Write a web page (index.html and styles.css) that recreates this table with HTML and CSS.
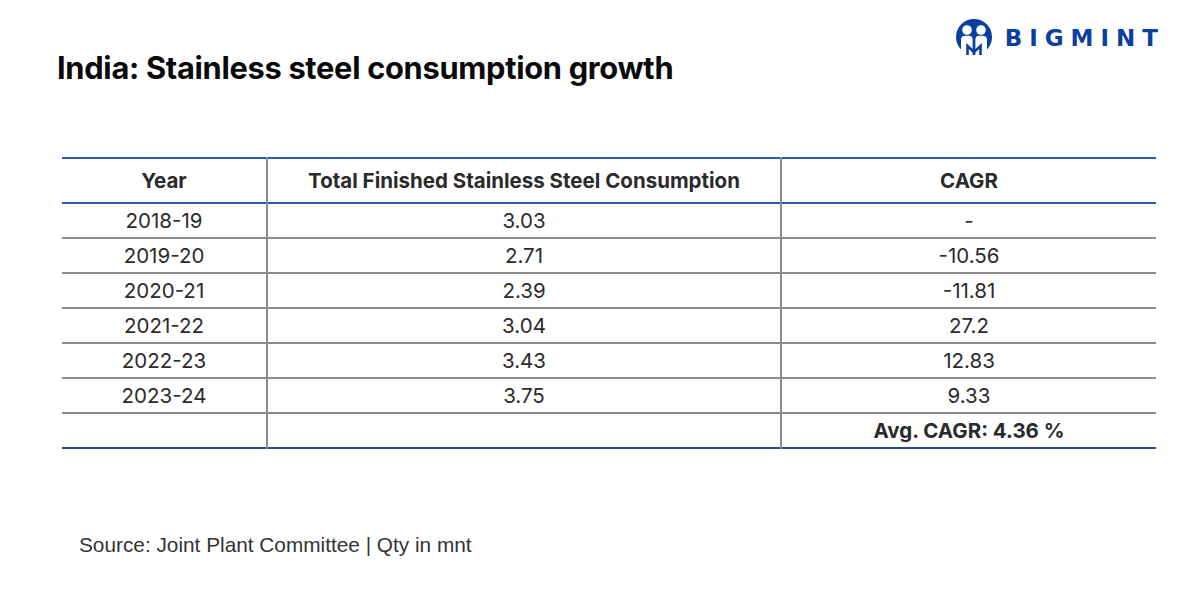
FILE: index.html
```html
<!DOCTYPE html>
<html>
<head>
<meta charset="utf-8">
<link rel="stylesheet" href="styles.css">
</head>
<body>
<div class="page">
  <header class="top">
    <h1 class="title">India: Stainless steel consumption growth</h1>
    <div class="logo">
      <svg class="logo-mark" width="38" height="37" viewBox="0 0 38 37">
        <circle cx="19" cy="18" r="18" fill="#0b3f9f"/>
        <circle cx="12" cy="11" r="4.8" fill="#fff"/>
        <circle cx="26" cy="11" r="4.8" fill="#fff"/>
        <path d="M6 37 L6 21 Q6 16.8 10.5 16.8 L14 16.8 Q17.6 16.8 17.6 21 L17.6 37 Z" fill="#fff"/>
        <path d="M20.4 37 L20.4 21 Q20.4 16.8 24 16.8 L27.5 16.8 Q32 16.8 32 21 L32 37 Z" fill="#fff"/>
        <path d="M12.5 36 L12.5 27 L19 33 L25.5 27 L25.5 36" fill="none" stroke="#0b3f9f" stroke-width="2.6"/>
      </svg>
      <span class="logo-text">BIGMINT</span>
    </div>
  </header>

  <table class="data">
    <thead>
      <tr><th class="c1">Year</th><th class="c2">Total Finished Stainless Steel Consumption</th><th class="c3">CAGR</th></tr>
    </thead>
    <tbody>
      <tr><td>2018-19</td><td>3.03</td><td>-</td></tr>
      <tr><td>2019-20</td><td>2.71</td><td>-10.56</td></tr>
      <tr><td>2020-21</td><td>2.39</td><td>-11.81</td></tr>
      <tr><td>2021-22</td><td>3.04</td><td>27.2</td></tr>
      <tr><td>2022-23</td><td>3.43</td><td>12.83</td></tr>
      <tr><td>2023-24</td><td>3.75</td><td>9.33</td></tr>
      <tr class="avg"><td></td><td></td><td>Avg. CAGR: 4.36 %</td></tr>
    </tbody>
  </table>

  <p class="source">Source: Joint Plant Committee | Qty in mnt</p>
</div>
</body>
</html>
```

FILE: styles.css
```css
* { box-sizing: border-box; }
html, body { margin: 0; padding: 0; background: #fff; }
body { width: 1200px; height: 600px; overflow: hidden; font-family: Inter, "Liberation Sans", sans-serif; color: #111; }
.page { padding: 0 42px 0 62px; }
.top { display: flex; justify-content: space-between; align-items: flex-start; height: 157px; }
.title { margin: 50px 0 0 -5px; font-size: 30.8px; line-height: 36px; font-weight: 700; letter-spacing: -0.3px; color: #0a0a0a; }
.logo { display: flex; align-items: center; gap: 12px; margin-top: 19px; }
.logo-mark { display: block; }
.logo-text { font-family: "DejaVu Sans", sans-serif; font-weight: 700; font-size: 23px; letter-spacing: 7px; color: #0b3f9f; margin-right: -7px; }
.data { width: 1094px; border-collapse: collapse; font-size: 20.5px; color: #2b2b2b; }
.data th, .data td { text-align: center; padding: 0; line-height: 24px; }
.data thead tr { height: 45px; border-top: 2px solid #2c5da8; border-bottom: 2px solid #2c5da8; }
.data th { font-weight: 700; }
.c1 { width: 205px; }
.c2 { width: 514px; }
.data tbody tr { height: 35px; border-bottom: 2px solid #8c8c8c; }
.data tbody tr.avg { border-bottom: 2px solid #1f4f8f; }
.data th + th, .data td + td { border-left: 2px solid #8c8c8c; }
.avg td { font-weight: 700; }
.source { margin: 84px 0 0 17px; font-family: "Liberation Sans", Arial, sans-serif; font-size: 20.8px; color: #333; }
```
